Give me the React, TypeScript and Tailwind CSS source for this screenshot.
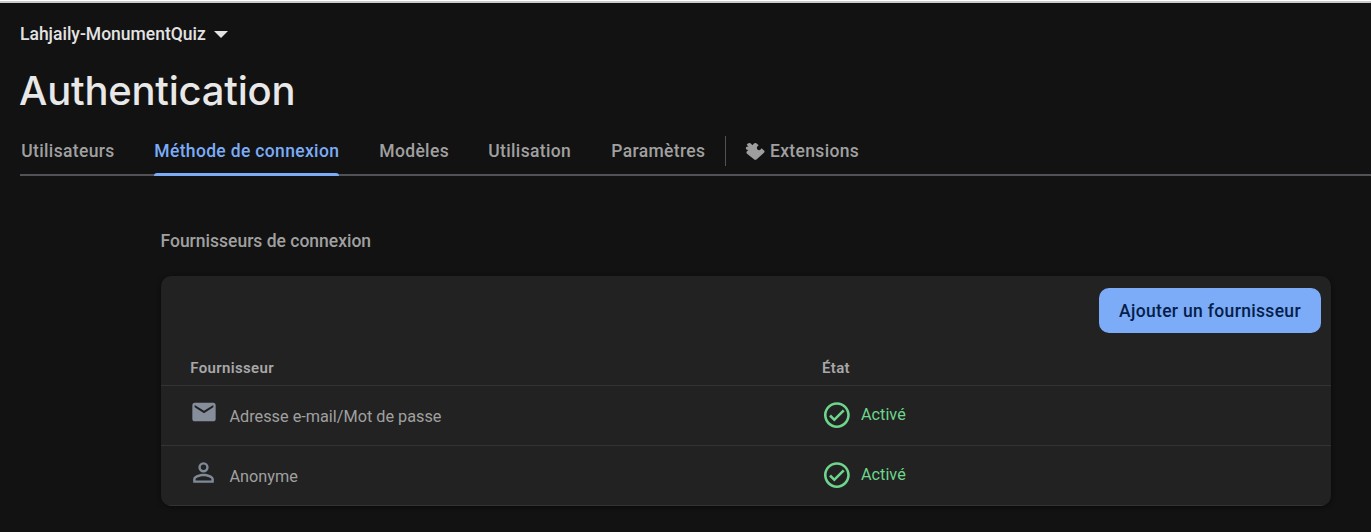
import type { ReactNode } from "react";

function MailIcon() {
  return (
    <svg viewBox="0 0 24 24" className="-mt-px block size-[28px] shrink-0 fill-[#868e9c]">
      <path d="M20 4H4c-1.100 0-1.990.9-1.990 2L2 18c0 1.100.9 2 2 2h16c1.100 0 2-.9 2-2V6c0-1.100-.9-2-2-2zm0 4l-8 5-8-5V6l8 5 8-5v2z" />
    </svg>
  );
}

function PersonIcon() {
  return (
    <svg viewBox="0 0 24 24" className="block size-[31px] shrink-0 fill-[#7f8998]">
      <path d="M12 4a4 4 0 1 0 0 8 4 4 0 0 0 0-8zm0 1.900a2.100 2.100 0 1 1 0 4.200 2.100 2.100 0 0 1 0-4.200zM12 13c-2.670 0-8 1.340-8 4v3h16v-3c0-2.660-5.330-4-8-4zm6.100 5.100H5.900V17c0-.64 3.130-2.100 6.100-2.100s6.100 1.460 6.100 2.100v1.100z" />
    </svg>
  );
}

function CheckIcon() {
  return (
    <svg viewBox="0 0 24 24" className="block size-[31px] fill-[#6dd58c]">
      <path d="M12.300 1.700C6.780 1.700 2.300 6.180 2.300 11.700s4.480 10 10 10 10-4.480 10-10S17.820 1.700 12.300 1.700zm0 18c-4.410 0-8-3.590-8-8s3.590-8 8-8 8 3.590 8 8-3.590 8-8 8zm4.590-12.420L10.300 13.870l-2.590-2.580L6.300 12.700l4 4 8-8z" />
    </svg>
  );
}

function ExtensionIcon() {
  return (
    <svg viewBox="0 0 60 56" className="block h-[18.700px] w-[20px] fill-[#9e9e9e]">
      <path d="M22 10Q28 1 33 3L41 10C35 14 34 20 38 23C42 26 47 24 50 19L58 26Q60 29 57 32L36 51Q31 56 26 51L7 36Q2 32 6 28L10 24C2 24 1 18 4 15Q7 12 11 14L5 8Q9 2 14 3Q19 4 22 10Z" />
    </svg>
  );
}

function Row({ icon, name }: { icon: ReactNode; name: string }) {
  return (
    <div className="flex h-[60px] items-center border-b border-[#333333] pl-[28.500px]">
      <div className="-mt-[6px] flex w-[28px] justify-center">{icon}</div>
      <span className="mt-[3px] ml-[12px] w-[591.500px] text-[16.25px]">{name}</span>
      <div className="flex items-center gap-[9px] text-[16.25px] text-[#6dd58c]">
        <CheckIcon />
        <span className="-mt-px">Activé</span>
      </div>
    </div>
  );
}

export default function App() {
  return (
    <main className="h-[532px] overflow-hidden border-t border-white bg-[#121212] font-['Roboto',sans-serif] text-[#a0a0a0]">
      <div className="h-[2px] bg-[#c9cbca]" />
      <header className="pl-5">
        <button className="mt-[20px] flex h-[22px] items-center text-[17.5px] font-medium text-[#e3e3e3]">
          <span className="w-[186px] text-left">Lahjaily-MonumentQuiz</span>
          <svg viewBox="0 0 14 7" className="ml-[8px] h-[7px] w-[14px] fill-current"><path d="M0 0h14L7 7z" /></svg>
        </button>
        <h1 className="mt-[18px] -ml-px h-[56px] font-['Inter',sans-serif] text-[40px] leading-[56px] font-medium tracking-[-0.230px] text-[#e8e8e8]">Authentication</h1>
        <nav className="mt-[9px] flex h-[48px] items-center border-b-2 border-[#505256] pl-[1.300px] text-[17.500px] font-medium tracking-[0.34px]">
          <a className="w-[133px]">Utilisateurs</a>
          <a className="relative mr-[40px] flex h-[48px] w-[185px] items-center text-[#7cacf8]">
            Méthode de connexion
            <span className="absolute inset-x-0 -bottom-px h-[3px] rounded-t-[3px] bg-[#7cacf8]" />
          </a>
          <a className="w-[109px]">Modèles</a>
          <a className="w-[123px]">Utilisation</a>
          <a className="w-[113.700px]">Paramètres</a>
          <span className="h-[30px] w-px bg-[#505256]" />
          <a className="ml-[19px] flex items-center gap-[5px]"><ExtensionIcon />Extensions</a>
        </nav>
      </header>
      <section className="mt-[52px] ml-[161px] w-[1170px]">
        <h2 className="-ml-[0.500px] h-[26px] text-[17.500px] leading-[26px] font-medium">Fournisseurs de connexion</h2>
        <div className="mt-[22px] overflow-hidden rounded-[10px] bg-[#222222] shadow-[0_1px_4px_rgba(0,0,0,0.5)]">
          <div className="flex h-[74px] justify-end pt-[12px] pr-[10px]">
            <button className="h-[45px] w-[222px] rounded-[10px] bg-[#7cacf8] pt-px text-[17.500px] font-medium tracking-[0.32px] text-[#041e49]">Ajouter un fournisseur</button>
          </div>
          <div className="flex h-[36px] items-center border-b border-[#333333] pt-px pl-[29.300px] text-[15px] font-semibold tracking-[0.34px] text-[#a8a8a8]">
            <span className="w-[631.700px]">Fournisseur</span>
            <span>État</span>
          </div>
          <Row icon={<MailIcon />} name="Adresse e-mail/Mot de passe" />
          <Row icon={<PersonIcon />} name="Anonyme" />
        </div>
      </section>
    </main>
  );
}
